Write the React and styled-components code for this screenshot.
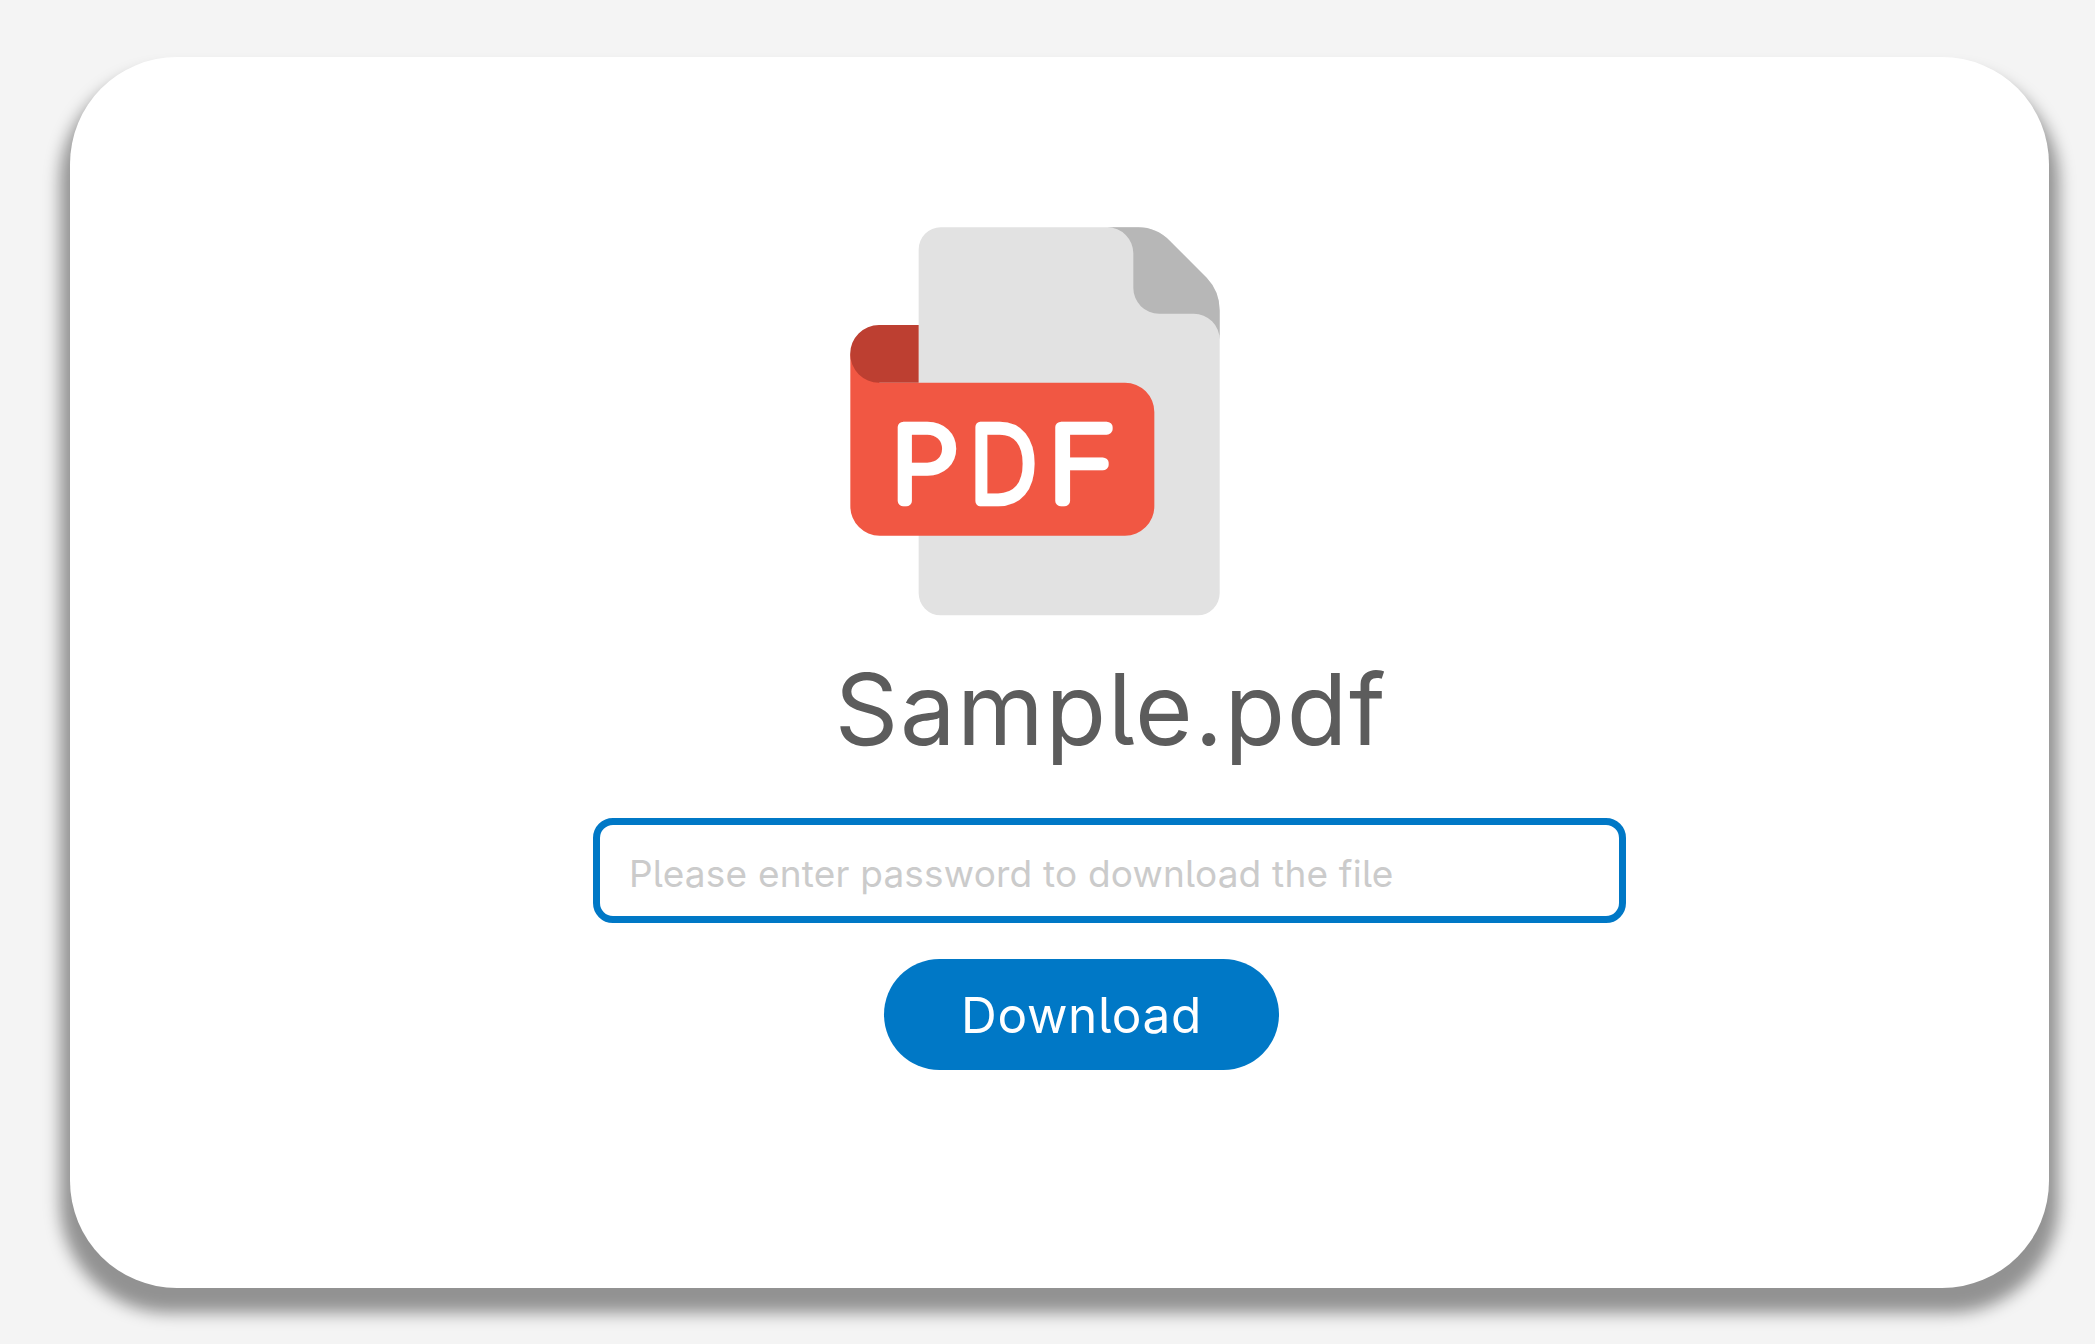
import React from "react";
import styled, { createGlobalStyle } from "styled-components";

const GlobalStyle = createGlobalStyle`
  *, *::before { box-sizing: border-box; }
  body {
    margin: 0;
    background: #f4f4f4;
    font-family: Inter, "Noto Sans", sans-serif;
    font-feature-settings: "cv05" 1;
    overflow: hidden;
  }
`;

const Page = styled.main`
  position: relative;
  z-index: 0;
  width: 2095px;
  height: 1344px;
  padding: 57px 46px 56px 70px;
  background: #f4f4f4;
`;

const Card = styled.section`
  position: relative;
  height: 1231px;
  padding: 170px 423px 0 523px;
  border-radius: 107px;
  background: #fff;

  /* soft drop shadow, slightly larger than the card */
  &::before {
    content: "";
    position: absolute;
    z-index: -1;
    inset: 14px -10px -25px;
    border-radius: 110px;
    background: rgba(0, 0, 0, 0.4);
    filter: blur(8px);
  }
`;

const Form = styled.form`
  display: flex;
  flex-direction: column;
  align-items: center;
`;

const FileIcon = styled.svg`
  display: block;
  width: 370px;
  height: 389px;
  margin-right: 149px;
`;

const FileName = styled.h1`
  margin: 33px 0 0 3px;
  height: 120px;
  line-height: 120px;
  font-size: 99px;
  font-weight: 400;
  letter-spacing: ${(p) => p.$tracking};
  color: #5c5c5c;
  white-space: nowrap;
`;

const PasswordInput = styled.input`
  width: 1033px;
  height: 105px;
  margin-top: 49px;
  padding: 6px 29px 0;
  border: 7px solid #0078c6;
  border-radius: 20px;
  outline: none;
  background: #fff;
  font: inherit;
  font-feature-settings: inherit;
  font-size: 37px;
  letter-spacing: ${(p) => p.$tracking};

  &::placeholder { color: #cbcbcb; opacity: 1; }
`;

const DownloadButton = styled.button`
  width: 395px;
  height: 111px;
  margin: 36px 56px 0 0;
  padding: 0;
  border: 0;
  border-radius: 56px;
  background: #0078c6;
  color: #fff;
  font: inherit;
  font-feature-settings: inherit;
  font-size: 49.5px;
  letter-spacing: ${(p) => p.$tracking};
`;

const BadgeLetter = styled.text`
  font-family: Inter, sans-serif;
  font-weight: 100;
  font-size: 305px;
  fill: #fff;
  stroke: #fff;
  stroke-width: 32px;
  stroke-linejoin: round;
`;

const PdfIcon = () => (
  <FileIcon viewBox="60 51 1110 1167" role="img" aria-label="PDF">
    <path d="M332 52H925Q979 52 1020 93L1130 203Q1169 244 1169 301V1149A66 66 0 0 1 1103 1216H332A66 66 0 0 1 266 1149V118A66 66 0 0 1 332 52Z" fill="#e2e2e2" />
    <path d="M832 52H925Q979 52 1020 93L1130 203Q1169 244 1169 301V389A78 78 0 0 0 1091 311H987A77 77 0 0 1 910 234V130A78 78 0 0 0 832 52Z" fill="#b7b7b7" />
    <path d="M61 432V889A88 88 0 0 0 149 977H885A88 88 0 0 0 973 889V606A88 88 0 0 0 885 518H149Z" fill="#f15743" />
    <path d="M266 345H147A86.500 86.500 0 0 0 147 518H266Z" fill="#bd3f31" />
    <BadgeLetter transform="translate(183 872)" textLength="202" lengthAdjust="spacingAndGlyphs">P</BadgeLetter>
    <BadgeLetter transform="translate(419 872)" textLength="200" lengthAdjust="spacingAndGlyphs">D</BadgeLetter>
    <BadgeLetter transform="translate(655 872)" textLength="203" lengthAdjust="spacingAndGlyphs">F</BadgeLetter>
  </FileIcon>
);

export default function App() {
  return (
    <>
      <GlobalStyle />
      <Page>
        <Card>
          <Form onSubmit={(e) => e.preventDefault()}>
            <PdfIcon />
            <FileName $tracking="1.6px">Sample.pdf</FileName>
            <PasswordInput $tracking="0.2px" type="password" placeholder="Please enter password to download the file" />
            <DownloadButton $tracking="0.7px">Download</DownloadButton>
          </Form>
        </Card>
      </Page>
    </>
  );
}
